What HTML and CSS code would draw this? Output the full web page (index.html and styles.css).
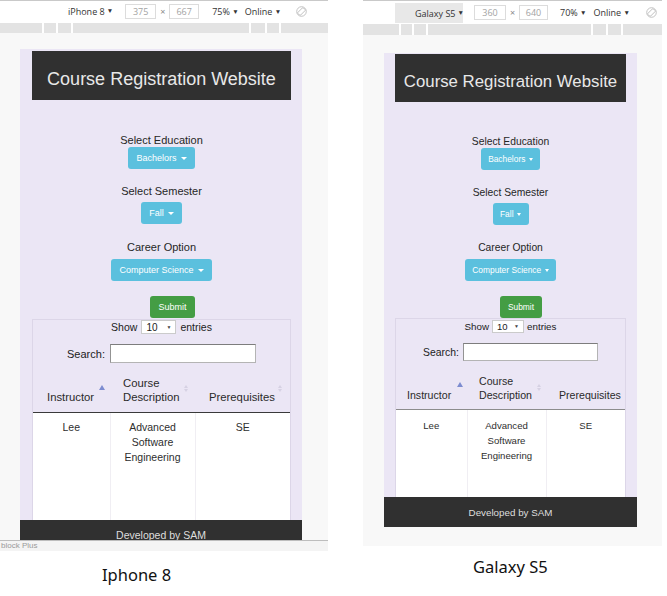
FILE: index.html
```html
<!DOCTYPE html>
<html lang="en">
<head>
<meta charset="utf-8">
<title>Course Registration Website – device previews</title>
<link rel="stylesheet" href="styles.css">
</head>
<body>
<div class="shots">
  <section class="shot shot-a">
    <div class="toolbar">
      <span class="device">iPhone 8 <span class="tri">▼</span></span>
      <span class="dim dim-w">375</span><span class="times">×</span><span class="dim dim-h">667</span>
      <span class="zoom">75% <span class="tri">▼</span></span>
      <span class="net">Online <span class="tri">▼</span></span>
      <svg class="rot" width="11" height="11" viewBox="0 0 11 11"><circle cx="5.5" cy="5.5" r="4.8" fill="none" stroke="#bdbdbd" stroke-width="0.9"/><rect x="3.6" y="1.6" width="3.8" height="7.8" rx="0.8" transform="rotate(45 5.5 5.5)" fill="none" stroke="#bdbdbd" stroke-width="0.9"/></svg>
    </div>
    <div class="ruler"><span class="s1"></span><span class="s2"></span><span class="s3"></span><span class="s4"></span><span class="s5"></span><span class="s6"></span><span class="s7"></span></div>
    <div class="viewport">
      <div class="phone">
        <div class="content">
          <div class="header"><h1>Course Registration Website</h1></div>
          <div class="group g1"><div class="lbl">Select Education</div><span class="btn info">Bachelors<span class="caret"></span></span></div>
          <div class="group g2"><div class="lbl">Select Semester</div><span class="btn info">Fall<span class="caret"></span></span></div>
          <div class="group g3"><div class="lbl">Career Option</div><span class="btn info">Computer Science<span class="caret"></span></span></div>
          <div class="submit-row"><span class="btn success">Submit</span></div>
          <div class="dt">
            <div class="len">Show <span class="sel">10<span class="sel-arrow">▼</span></span> entries</div>
            <div class="search"><span class="search-lbl">Search:</span><span class="input"></span></div>
            <table class="grid">
              <colgroup><col class="c1"><col class="c2"><col class="c3"></colgroup>
              <thead>
                <tr>
                  <th class="h1c">Instructor<span class="sort asc"></span></th>
                  <th class="h2c">Course Description<span class="sort both"></span></th>
                  <th class="h3c">Prerequisites<span class="sort both"></span></th>
                </tr>
              </thead>
              <tbody>
                <tr>
                  <td class="d1"><div class="cell">Lee</div></td>
                  <td class="d2"><div class="cell">Advanced Software Engineering</div></td>
                  <td class="d3"><div class="cell">SE</div></td>
                </tr>
              </tbody>
            </table>
          </div>
        </div>
        <div class="footer">Developed by SAM</div>
      </div>
    </div>
    <div class="strip">block Plus</div>
    <div class="caption">Iphone 8</div>
  </section>

  <section class="shot shot-b">
    <div class="toolbar">
      <span class="device">Galaxy S5 <span class="tri">▼</span></span>
      <span class="dim dim-w">360</span><span class="times">×</span><span class="dim dim-h">640</span>
      <span class="zoom">70% <span class="tri">▼</span></span>
      <span class="net">Online <span class="tri">▼</span></span>
      <svg class="rot" width="11" height="11" viewBox="0 0 11 11"><circle cx="5.5" cy="5.5" r="4.8" fill="none" stroke="#bdbdbd" stroke-width="0.9"/><rect x="3.6" y="1.6" width="3.8" height="7.8" rx="0.8" transform="rotate(45 5.5 5.5)" fill="none" stroke="#bdbdbd" stroke-width="0.9"/></svg>
    </div>
    <div class="ruler"><span class="s1"></span><span class="s2"></span><span class="s3"></span><span class="s4"></span><span class="s5"></span><span class="s6"></span><span class="s7"></span></div>
    <div class="viewport">
      <div class="phone">
        <div class="content">
          <div class="header"><h1>Course Registration Website</h1></div>
          <div class="group g1"><div class="lbl">Select Education</div><span class="btn info">Bachelors<span class="caret"></span></span></div>
          <div class="group g2"><div class="lbl">Select Semester</div><span class="btn info">Fall<span class="caret"></span></span></div>
          <div class="group g3"><div class="lbl">Career Option</div><span class="btn info">Computer Science<span class="caret"></span></span></div>
          <div class="submit-row"><span class="btn success">Submit</span></div>
          <div class="dt">
            <div class="len">Show <span class="sel">10<span class="sel-arrow">▼</span></span> entries</div>
            <div class="search"><span class="search-lbl">Search:</span><span class="input"></span></div>
            <table class="grid">
              <colgroup><col class="c1"><col class="c2"><col class="c3"></colgroup>
              <thead>
                <tr>
                  <th class="h1c">Instructor<span class="sort asc"></span></th>
                  <th class="h2c">Course Description<span class="sort both"></span></th>
                  <th class="h3c">Prerequisites</th>
                </tr>
              </thead>
              <tbody>
                <tr>
                  <td class="d1"><div class="cell">Lee</div></td>
                  <td class="d2"><div class="cell">Advanced Software Engineering</div></td>
                  <td class="d3"><div class="cell">SE</div></td>
                </tr>
              </tbody>
            </table>
          </div>
        </div>
        <div class="footer">Developed by SAM</div>
      </div>
    </div>
    <div class="caption">Galaxy S5</div>
  </section>
</div>
</body>
</html>
```

FILE: styles.css
```css
* { box-sizing: border-box; margin: 0; padding: 0; }

body {
  width: 667px;
  height: 596px;
  overflow: hidden;
  background: #ffffff;
  font-family: "Liberation Sans", Arial, sans-serif;
  color: #333333;
}

.shots { display: flex; gap: 35px; }
.shot-a { width: 328px; }
.shot-b { width: 299px; }

/* ---------- device toolbar ---------- */
.toolbar {
  display: flex;
  align-items: center;
  border-top: 1px solid #c9c9c9;
  font-family: "Open Sans", "Liberation Sans", sans-serif;
  font-size: 9px;
  color: #333333;
  white-space: nowrap;
}
.shot-a .toolbar { height: 22px; padding-left: 68px; }
.shot-b .toolbar { height: 23px; padding-left: 32px; }

.tri { font-size: 6.5px; position: relative; top: -1px; }

.device { display: flex; align-items: center; gap: 2px; }
.shot-b .device {
  align-self: stretch;
  margin-top: 2px;
  width: 68px;
  padding-left: 20px;
  background: #e8e8e8;
}

.dim {
  height: 15px;
  line-height: 13px;
  border: 1px solid #dcdcdc;
  color: #a3a3a3;
  text-align: center;
  background: #ffffff;
}
.shot-a .dim-w { width: 31px; margin-left: 12px; }
.shot-a .dim-h { width: 30px; }
.shot-b .dim-w { width: 32px; margin-left: 11px; }
.shot-b .dim-h { width: 29px; }
.times { margin: 0 4px; color: #888888; width: 5px; text-align: center; }

.shot-a .zoom { margin-left: 13px; }
.shot-b .zoom { margin-left: 12px; }
.shot-a .net { margin-left: 6px; }
.shot-b .net { margin-left: 7px; }
.shot-a .rot { margin-left: 15px; }
.shot-b .rot { margin-left: 16px; }

/* ---------- ruler ---------- */
.ruler { display: flex; gap: 2px; margin-top: 1px; background: #ffffff; }
.ruler span { background: #e3e3e3; }
.shot-a .ruler { height: 10px; }
.shot-b .ruler { height: 11px; }
.shot-a .s1 { width: 42px; } .shot-a .s2 { width: 12px; } .shot-a .s3 { width: 13px; }
.shot-a .s4 { width: 176px; } .shot-a .s5 { width: 14px; } .shot-a .s6 { width: 12px; }
.shot-a .s7 { width: 47px; }
.shot-b .s1 { width: 36px; } .shot-b .s2 { width: 11px; } .shot-b .s3 { width: 12px; }
.shot-b .s4 { width: 163px; } .shot-b .s5 { width: 13px; } .shot-b .s6 { width: 13px; }
.shot-b .s7 { width: 39px; }

/* ---------- emulator viewport ---------- */
.viewport { background: #f8f8f8; overflow: hidden; }
.shot-a .viewport {
  height: 508px;
  padding: 16px 0 0 20px;
  border-bottom: 1px solid #bdbdbd;
}
.shot-b .viewport {
  height: 511px;
  padding: 18px 0 0 21px;
}

.phone {
  background: #ebe6f5;
  display: flex;
  flex-direction: column;
  overflow: hidden;
}
.shot-a .phone { width: 282px; height: 491px; }
.shot-b .phone { width: 253px; }

.shot-a .content { padding: 0 11px 0 12px; }
.shot-b .content { padding: 0 11px; }

/* header */
.header { background: #303030; }
.header h1 {
  font-weight: normal;
  color: #e8e8e8;
  text-align: center;
  white-space: nowrap;
}
.shot-a .header { margin-top: 2px; height: 49px; padding-top: 18px; }
.shot-a .header h1 { font-size: 18px; line-height: 20px; }
.shot-b .header { margin-top: 1px; height: 48px; padding-top: 18px; }
.shot-b .header h1 { font-size: 16.8px; line-height: 19px; }

/* form groups */
.group { text-align: center; }
.lbl { color: #262626; }
.shot-a .lbl { font-size: 11px; line-height: 14px; }
.shot-b .lbl { font-size: 10.3px; line-height: 13px; }

.g1 { margin-top: 33px; }
.g2 { margin-top: 15px; }
.g3 { margin-top: 16px; }
.shot-b .g2 { margin-top: 16px; }
.g2 .lbl { margin-bottom: 4px; }
.g3 .lbl { margin-bottom: 5px; }

.btn {
  display: inline-flex;
  align-items: center;
  height: 22px;
  border-radius: 3px;
  color: #ffffff;
  white-space: nowrap;
  vertical-align: top;
}
.shot-a .btn { font-size: 9px; padding: 0 8px; }
.shot-b .btn { font-size: 8.4px; padding: 0 7.5px; }
.info { background: #5bc0de; }
.success { background: #449d44; }

.caret {
  width: 0;
  height: 0;
  margin-left: 4px;
  border-left: 3px solid transparent;
  border-right: 3px solid transparent;
  border-top: 3px solid #ffffff;
}
.shot-b .caret { margin-left: 3.5px; border-left-width: 2.5px; border-right-width: 2.5px; }

.submit-row { margin-top: 15px; text-align: center; }
.shot-a .submit-row { padding-left: 22px; }
.shot-b .submit-row { padding-left: 21px; }

/* ---------- data table ---------- */
.dt { border: 1px solid #dcd6e8; border-bottom: 0; }
.shot-a .dt { margin-top: 1px; }

.len {
  display: flex;
  align-items: center;
  justify-content: center;
  gap: 4px;
  height: 14px;
  color: #222222;
}
.shot-a .len { font-size: 10.5px; }
.shot-b .len { font-size: 9.8px; gap: 3px; height: 14px; }

.sel {
  display: flex;
  align-items: center;
  justify-content: space-between;
  height: 14px;
  padding: 0 4px 0 4px;
  background: #ffffff;
  border: 1px solid #cbcbcb;
  font-size: 10px;
  color: #222222;
}
.shot-a .sel { width: 35px; }
.shot-b .sel { width: 32px; height: 13px; font-size: 9.5px; }
.sel-arrow { font-size: 5px; color: #444444; }

.search {
  display: flex;
  align-items: center;
  justify-content: center;
  gap: 5px;
  margin-top: 10px;
  color: #222222;
}
.shot-a .search-lbl { font-size: 11px; }
.shot-b .search-lbl { font-size: 10.4px; }
.input {
  background: #ffffff;
  border: 1px solid #b4b4b4;
  border-top-color: #7d7d7d;
  border-left-color: #939393;
}
.shot-a .input { width: 146px; height: 19px; }
.shot-b .search { gap: 4px; }
.shot-b .input { width: 135px; height: 18px; }

.grid {
  width: 100%;
  border-collapse: collapse;
  table-layout: fixed;
  margin-top: 5px;
}
.shot-a .c1 { width: 77px; } .shot-a .c2 { width: 85px; } .shot-a .c3 { width: 95px; }
.shot-b .c1 { width: 71px; } .shot-b .c2 { width: 79px; } .shot-b .c3 { width: 79px; }

.grid th {
  position: relative;
  font-weight: normal;
  text-align: left;
  vertical-align: bottom;
  color: #2a2a2a;
  line-height: 14px;
}
.shot-a .grid th {
  font-size: 11.3px;
  padding: 8px 10px 8px 14px;
  border-bottom: 1px solid #3a3a3a;
}
.shot-a .grid .h2c { padding-left: 13px; }
.shot-b .grid th {
  font-size: 10.6px;
  padding: 8px 3px 7px 12px;
  border-bottom: 1px solid #8c8c8c;
}
.shot-b .grid .h1c { padding-left: 11px; }
.shot-b .grid .h3c { padding-left: 13px; }

.sort { position: absolute; width: 6px; }
.sort.asc {
  border-left: 3px solid transparent;
  border-right: 3px solid transparent;
  border-bottom: 5px solid #7d8cd0;
  width: 0;
  height: 0;
}
.sort.both::before,
.sort.both::after {
  content: "";
  display: block;
  width: 0;
  height: 0;
  border-left: 2.5px solid transparent;
  border-right: 2.5px solid transparent;
}
.sort.both::before { border-bottom: 3px solid #d6d1e3; margin-bottom: 1px; }
.sort.both::after { border-top: 3px solid #d6d1e3; }

.shot-a .h1c .sort { right: 5px; top: 17px; }
.shot-a .h2c .sort { right: 5px; top: 17px; }
.shot-a .h3c .sort { right: 6px; top: 17px; }
.shot-b .h1c .sort { right: 4px; top: 16px; }
.shot-b .h2c .sort { right: 3px; top: 18px; }

.grid td {
  background: #ffffff;
  text-align: center;
  vertical-align: top;
  color: #2e2e2e;
  line-height: 15px;
}
.grid .d1, .grid .d2 { border-right: 1px solid #f0eef3; }
.shot-a .grid td { font-size: 10.5px; padding: 7px 2px 0; }
.shot-a .cell { height: 100px; }
.shot-b .grid td { font-size: 9.6px; padding: 8px 2px 0; }
.shot-b .cell { height: 79px; }

/* footer */
.footer {
  background: #303030;
  color: #dedede;
  text-align: center;
  white-space: nowrap;
}
.shot-a .footer { height: 30px; padding-top: 8px; font-size: 10.5px; line-height: 15px; flex-shrink: 0; }
.shot-b .footer { height: 30px; padding-top: 9px; font-size: 9.8px; line-height: 14px; }

/* below previews */
.strip {
  height: 10px;
  background: #f4f4f4;
  font-size: 8px;
  line-height: 10px;
  color: #9a9a9a;
  padding-left: 1px;
  white-space: nowrap;
}

.caption {
  font-family: "Noto Sans", "Liberation Sans", sans-serif;
  font-size: 16.5px;
  line-height: 20px;
  color: #111111;
}
.shot-a .caption { margin-top: 14px; padding-left: 102px; }
.shot-b .caption { margin-top: 11px; padding-left: 110px; }
```
